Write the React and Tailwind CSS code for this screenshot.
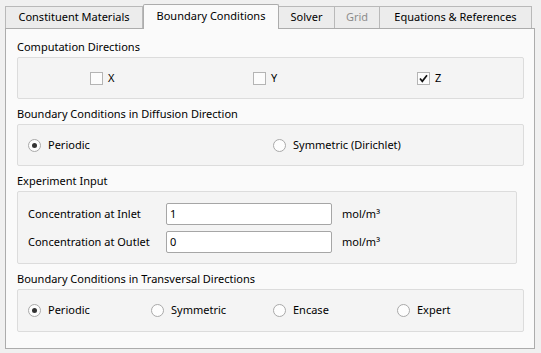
import React from 'react';

const font = { fontFamily: '"Noto Sans", "Segoe UI", sans-serif' };

const tabs = [
  { label: 'Constituent Materials', w: 'w-[138px]' },
  { label: 'Boundary Conditions', w: 'w-[136px]', active: true },
  { label: 'Solver', w: 'w-[56px]' },
  { label: 'Grid', w: 'w-[45px]', disabled: true },
  { label: 'Equations & References', w: 'w-[152px]' },
];

const Check = ({ checked, label }) => (
  <div className="flex items-center gap-[5px]">
    <div className="w-[13px] h-[13px] border border-[#b4b4b4] bg-[#fcfcfc] flex items-center justify-center">
      {checked && (
        <svg width="11" height="11" viewBox="0 0 11 11">
          <path d="M2 5.5 L4.3 8.3 L9 2.2" fill="none" stroke="#111" strokeWidth="1.7" />
        </svg>
      )}
    </div>
    <span>{label}</span>
  </div>
);

const Radio = ({ checked, label }) => (
  <div className="flex items-center gap-[7px]">
    <div className="w-[13px] h-[13px] rounded-full border border-[#a9a9a9] bg-[#fdfdfd] flex items-center justify-center">
      {checked && <div className="w-[5px] h-[5px] rounded-full bg-[#333]" />}
    </div>
    <span>{label}</span>
  </div>
);

const Heading = ({ children }) => (
  <div className="h-[20px] flex items-center">{children}</div>
);

const Field = ({ label, value }) => (
  <div className="flex items-center h-[22px]">
    <span className="w-[138px]">{label}</span>
    <div className="w-[166px] h-[22px] border border-[#a6a6a6] rounded-[2px] bg-white flex items-center pl-[3px]">{value}</div>
    <span className="ml-[10px]">mol/m³</span>
  </div>
);

export default function App() {
  return (
    <div className="w-[541px] h-[353px] bg-[#f0f0f0] pt-[4px] px-[5px] text-[11px] text-black" style={font}>
      <div className="flex items-end h-[24px]">
        {tabs.map((t) =>
          t.active ? (
            <div key={t.label} className={`${t.w} h-[25px] -mb-px relative z-10 bg-[#fafafa] border border-b-0 border-[#acacac] rounded-t-[2px] flex items-center justify-center pb-[2px]`}>
              {t.label}
            </div>
          ) : (
            <div key={t.label} className={`${t.w} h-[22px] bg-[#ececec] border border-l-0 first:border-l border-b-0 border-[#b9b9b9] flex items-center justify-center ${t.disabled ? 'text-[#8c8c8c]' : ''}`}>
              {t.label}
            </div>
          )
        )}
      </div>
      <div className="w-[530px] h-[321px] border border-[#acacac] bg-[#fafafa] pt-[8px] px-[11px]">
        <Heading>Computation Directions</Heading>
        <div className="h-[42px] w-[507px] border border-[#dcdcdc] rounded-[2px] bg-[#f4f4f4] flex items-center pl-[72px]">
          <div className="w-[163px]"><Check label="X" /></div>
          <div className="w-[164px]"><Check label="Y" /></div>
          <Check checked label="Z" />
        </div>
        <div className="h-[5px]" />
        <Heading>Boundary Conditions in Diffusion Direction</Heading>
        <div className="h-[42px] w-[507px] border border-[#dcdcdc] rounded-[2px] bg-[#f4f4f4] flex items-center pl-[10px]">
          <div className="w-[245px]"><Radio checked label="Periodic" /></div>
          <Radio label="Symmetric (Dirichlet)" />
        </div>
        <div className="h-[5px]" />
        <Heading>Experiment Input</Heading>
        <div className="h-[73px] w-[500px] border border-[#dcdcdc] rounded-[2px] bg-[#f4f4f4] pl-[10px] pt-[11px] flex flex-col gap-[6px]">
          <Field label="Concentration at Inlet" value="1" />
          <Field label="Concentration at Outlet" value="0" />
        </div>
        <div className="h-[5px]" />
        <Heading>Boundary Conditions in Transversal Directions</Heading>
        <div className="h-[43px] w-[507px] border border-[#dcdcdc] rounded-[2px] bg-[#f4f4f4] flex items-center pl-[10px]">
          <div className="w-[123px]"><Radio checked label="Periodic" /></div>
          <div className="w-[122px]"><Radio label="Symmetric" /></div>
          <div className="w-[124px]"><Radio label="Encase" /></div>
          <Radio label="Expert" />
        </div>
      </div>
    </div>
  );
}
